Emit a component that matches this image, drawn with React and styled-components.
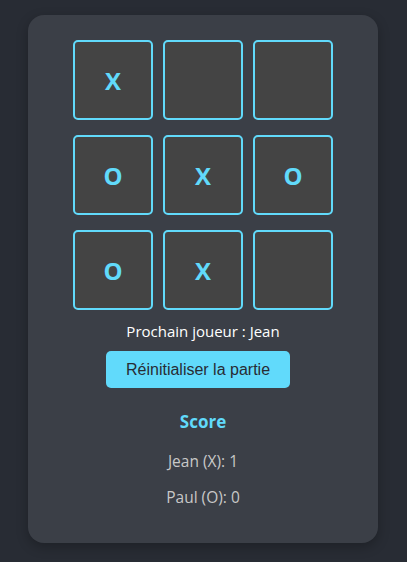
import React, { useState } from "react";
import styled, { createGlobalStyle } from "styled-components";

const GlobalStyle = createGlobalStyle`
  html, body {
    margin: 0;
    padding: 0;
    background-color: #282c34;
    font-family: "Open Sans", "Noto Sans", sans-serif;
  }
`;

const Page = styled.div`
  min-height: 562px;
  display: flex;
  justify-content: center;
  align-items: flex-start;
  padding-top: 15px;
  padding-right: 1px;
  box-sizing: border-box;
`;

const Card = styled.div`
  width: 350px;
  box-sizing: border-box;
  background-color: #3b3f47;
  border-radius: 16px;
  padding: 25px 20px 36px;
  display: flex;
  flex-direction: column;
  align-items: center;
  box-shadow: 0 4px 12px rgba(0, 0, 0, 0.25);
`;

const Board = styled.div`
  display: grid;
  grid-template-columns: repeat(3, 80px);
  grid-auto-rows: 80px;
  column-gap: 10px;
  row-gap: 15px;
`;

const Cell = styled.button`
  width: 80px;
  height: 80px;
  box-sizing: border-box;
  background-color: #444444;
  border: 2px solid #61dafb;
  border-radius: 5px;
  color: #61dafb;
  font-family: "Open Sans", "Noto Sans", sans-serif;
  font-size: 24px;
  font-weight: 700;
  cursor: pointer;
  padding: 0;
`;

const Status = styled.div`
  margin-top: 10px;
  color: #ffffff;
  font-size: 15px;
  line-height: 22px;
`;

const ResetButton = styled.button`
  margin-top: 9px;
  margin-right: 10px;
  width: 184px;
  height: 37px;
  background-color: #61dafb;
  border: none;
  border-radius: 5px;
  color: #282c34;
  font-family: "Liberation Sans", Arial, sans-serif;
  font-size: 16px;
  cursor: pointer;
`;

const ScoreTitle = styled.h3`
  margin: 22px 0 0;
  color: #61dafb;
  font-size: 17px;
  font-weight: 700;
  line-height: 24px;
`;

const ScoreLine = styled.p`
  margin: ${(props) => props.gap}px 0 0;
  color: #c8c8c8;
  font-size: 15.5px;
  line-height: 20px;
`;

const initial = ["X", "", "", "O", "X", "O", "O", "X", ""];

export default function App() {
  const [cells] = useState(initial);

  return (
    <>
      <GlobalStyle />
      <Page>
        <Card>
          <Board>
            {cells.map((v, i) => (
              <Cell key={i}>{v}</Cell>
            ))}
          </Board>
          <Status>Prochain joueur : Jean</Status>
          <ResetButton>Réinitialiser la partie</ResetButton>
          <ScoreTitle>Score</ScoreTitle>
          <ScoreLine gap={17}>Jean (X): 1</ScoreLine>
          <ScoreLine gap={16}>Paul (O): 0</ScoreLine>
        </Card>
      </Page>
    </>
  );
}
